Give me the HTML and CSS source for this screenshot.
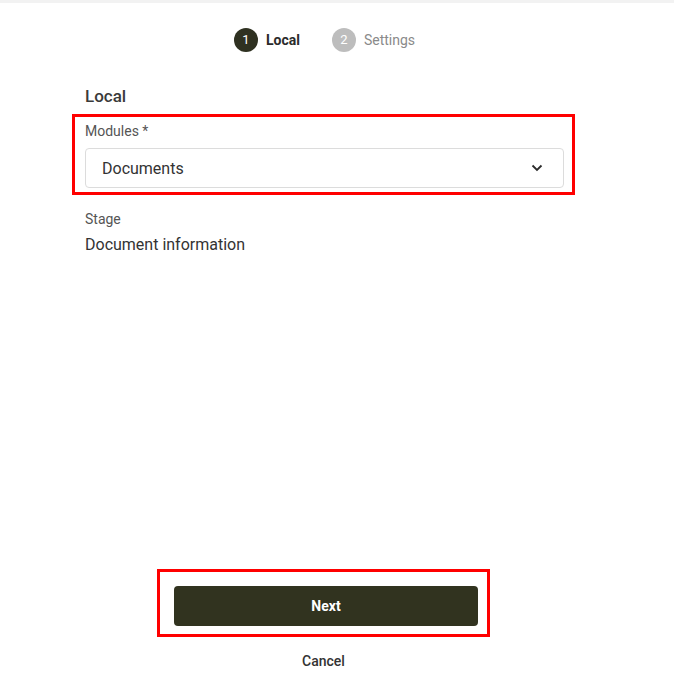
FILE: index.html
```html
<!DOCTYPE html>
<html>
<head>
<meta charset="utf-8">
<link rel="stylesheet" href="styles.css">
</head>
<body>
<div class="topbar"></div>
<div class="page">
  <div class="content">
    <div class="stepper">
      <div class="step active"><span class="circle">1</span><span class="step-label">Local</span></div>
      <div class="step"><span class="circle">2</span><span class="step-label">Settings</span></div>
    </div>
    <h2 class="title">Local</h2>
    <div class="highlight field-box">
      <div class="label">Modules *</div>
      <div class="select">
        <span>Documents</span>
        <svg class="chev" width="12" height="8" viewBox="0 0 12 8"><path d="M1.5 1.5 L6 6 L10.5 1.5" fill="none" stroke="#2b2b2b" stroke-width="1.8"/></svg>
      </div>
    </div>
    <div class="label stage-label">Stage</div>
    <div class="value">Document information</div>
  </div>
  <div class="footer">
    <div class="highlight btn-box">
      <button class="btn">Next</button>
    </div>
    <div class="cancel">Cancel</div>
  </div>
</div>
</body>
</html>
```
FILE: styles.css
```css
html, body { margin: 0; padding: 0; background: #fff; }
body { font-family: Roboto, "Liberation Sans", sans-serif; color: #333; }
.topbar { height: 3px; background: #f2f2f2; }
.page { display: flex; flex-direction: column; min-height: 687px; }
.content { width: 479px; margin-left: 85px; }
.stepper { display: flex; justify-content: center; margin-top: 25px; gap: 32px; }
.step { display: flex; align-items: center; gap: 8px; }
.circle { width: 24px; height: 24px; border-radius: 50%; background: #bdbdbd; color: #fff; font-size: 13px; line-height: 24px; display: flex; align-items: center; justify-content: center; }
.step.active .circle { background: #2f3121; }
.step-label { font-size: 14px; line-height: 16px; color: #8a8a8a; margin-top: -1px; }
.step.active .step-label { color: #2b2b2b; font-weight: 700; }
.title { font-size: 17px; line-height: 20px; font-weight: 500; margin: 34px 0 8px; color: #3a3a3a; }
.highlight { border: 3px solid #ff0000; }
.field-box { margin: 0 -11px 0 -13px; padding: 6px 8px 4px 10px; }
.label { font-size: 14px; line-height: 16px; color: #555; }
.select { margin-top: 9px; height: 38px; border: 1px solid #dcdcdc; border-radius: 4px; display: flex; align-items: center; justify-content: space-between; padding: 0 20px 0 16px; font-size: 16px; color: #333; }
.stage-label { margin-top: 16px; }
.value { font-size: 16px; line-height: 20px; margin-top: 8px; color: #333; }
.footer { margin-top: auto; display: flex; flex-direction: column; align-items: center; padding-bottom: 21px; margin-left: -27px; }
.btn-box { padding: 14px 9px 8px 14px; }
.btn { display: block; width: 304px; height: 40px; background: #31331f; color: #fff; border: 0; border-radius: 4px; font-family: inherit; font-size: 14px; font-weight: 700; }
.cancel { margin-top: 16px; font-size: 14px; line-height: 16px; font-weight: 500; color: #333; }
```
